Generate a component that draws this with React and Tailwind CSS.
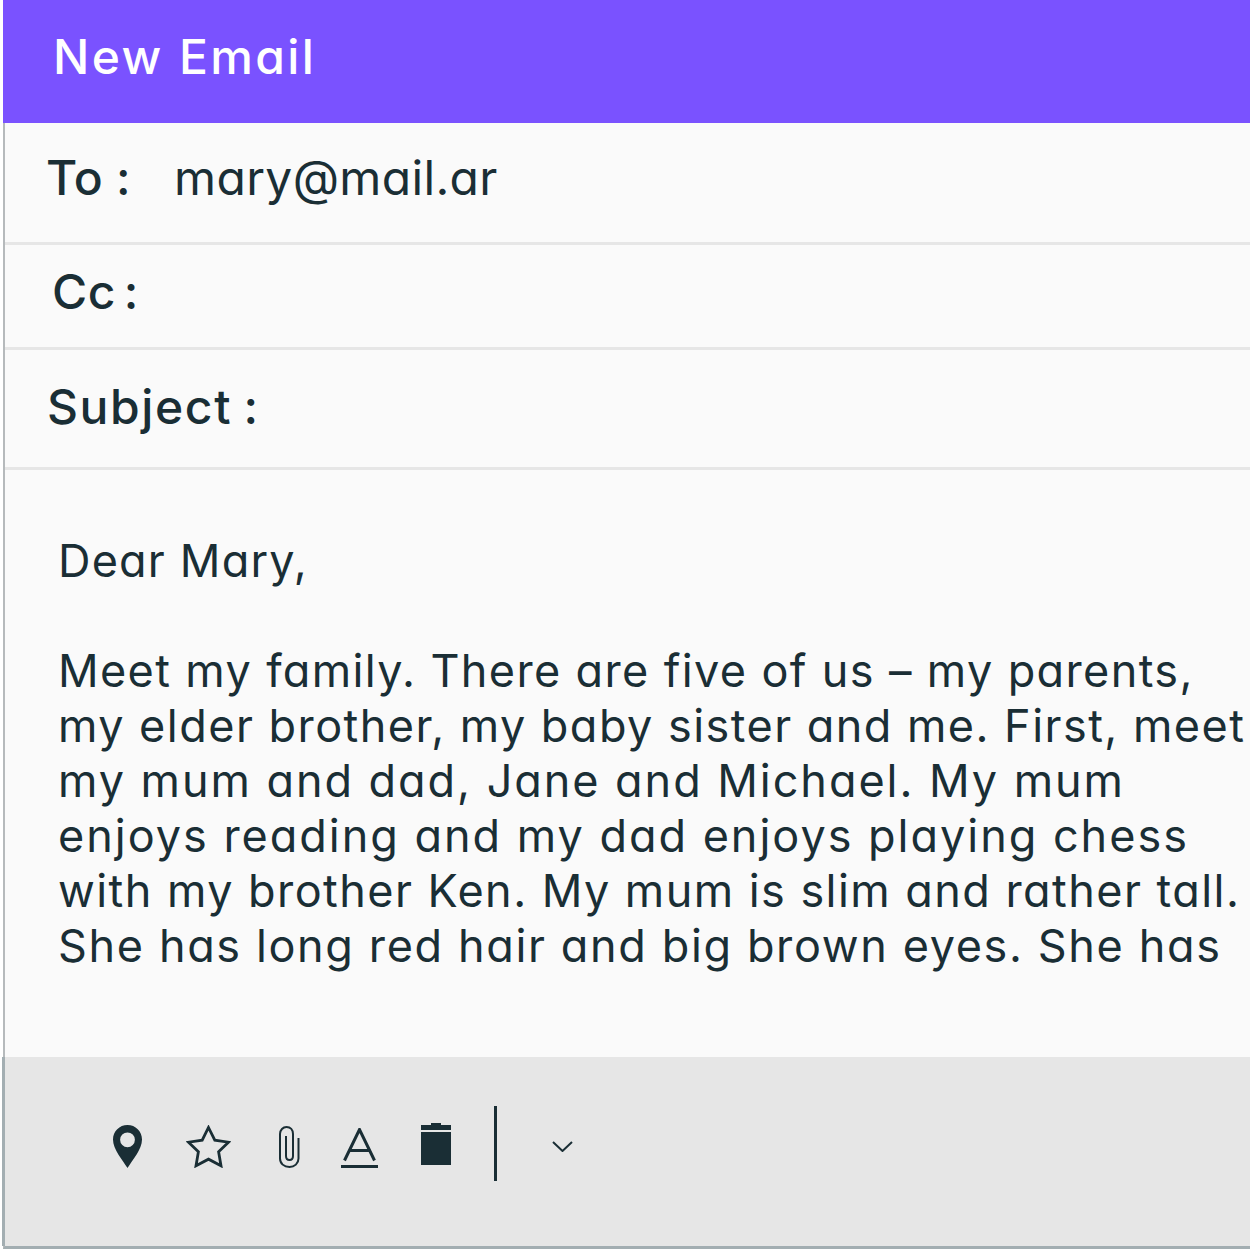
const F = "font-['Inter','Liberation_Sans',sans-serif] [font-feature-settings:'cv11']";

function Pin() {
  return (
    <svg className="mt-[68px] shrink-0" width="29" height="43" viewBox="0 0 29 43">
      <path fillRule="evenodd" fill="#1a2e35" d="M14.5 0C6.5 0 0 6.4 0 14.4 0 24 9.5 35 14.5 43 19.5 35 29 24 29 14.4 29 6.4 22.5 0 14.5 0ZM14.5 7.4a7.4 7.4 0 1 1 0 14.8 7.4 7.4 0 0 1 0-14.8Z" />
    </svg>
  );
}
function Star() {
  return (
    <svg className="ml-[44px] mt-[68px] shrink-0" width="45" height="43" viewBox="0 0 45 43">
      <path fill="none" stroke="#1a2e35" strokeWidth="2.8" d="M22.5 2.5 28.8 15.2 42.5 17.2 32.6 26.8 35 40.8 22.5 34.2 10 40.8 12.4 26.8 2.5 17.2 16.2 15.2Z" />
    </svg>
  );
}
function Clip() {
  return (
    <svg className="ml-[48px] mt-[69px] shrink-0" width="21" height="42" viewBox="0 0 21 42">
      <path fill="none" stroke="#1a2e35" strokeWidth="2" d="M19.5 12V32.5C19.5 37.5 15.5 41 10.5 41 5 41 1 37.5 1 32.5V8C1 4 4 1 7.5 1 11.5 1 14 4 14 8V30C14 32.5 12.5 34 10.5 34 8.5 34 7 32.5 7 30V10" />
    </svg>
  );
}
function LetterA() {
  return (
    <svg className="ml-[41px] mt-[71px] shrink-0" width="37" height="40" viewBox="0 0 37 40">
      <path fill="none" stroke="#1a2e35" strokeWidth="3" d="M3.5 32.5 18.5 1.5 33.5 32.5M8 22.5H29" />
      <rect x="0" y="37" width="37" height="3" fill="#1a2e35" />
    </svg>
  );
}
function Trash() {
  return (
    <svg className="ml-[43px] mt-[66px] shrink-0" width="30" height="42" viewBox="0 0 30 42">
      <path fill="#1a2e35" d="M10 0H20V2H30V7H0V2H10ZM0 9H30V42H0Z" />
    </svg>
  );
}
function Chevron() {
  return (
    <svg className="ml-[55px] mt-[84px] shrink-0" width="21" height="11" viewBox="0 0 21 11">
      <path fill="none" stroke="#1a2e35" strokeWidth="2" d="M1 1 10.5 10 20 1" />
    </svg>
  );
}

export default function App() {
  return (
    <div className={`w-[1250px] h-[1250px] bg-white overflow-hidden ${F} text-[#1a2e35]`}>
      <div className="h-[1249px] ml-[3px] border-l-2 border-b-[3px] border-l-[#b6babc] border-b-[#a3aeb2] bg-[#fafafa] flex flex-col">
        <div className="h-[123px] -ml-[2px] bg-[#7a52ff] text-white pl-[50px] pt-[27px] text-[48px] leading-[60px] font-[450] tracking-[2.4px] shrink-0">New Email</div>
        <div className="h-[122px] border-b-[3px] border-[#e6e6e6] flex shrink-0 pt-[25px] text-[48px] leading-[60px]">
          <span className="ml-[41px] w-[128px] font-[450] tracking-[0.2px]">To :</span>
          <span className="tracking-[0.35px]">mary@mail.ar</span>
        </div>
        <div className="h-[105px] border-b-[3px] border-[#e6e6e6] shrink-0 pl-[47px] pt-[17px] text-[48px] leading-[60px] font-[450] tracking-[0.5px] [word-spacing:-5.5px]">Cc :</div>
        <div className="h-[120px] border-b-[3px] border-[#e6e6e6] shrink-0 pl-[42px] pt-[27px] text-[48px] leading-[60px] font-[450] tracking-[1.6px] [word-spacing:-3px]">Subject :</div>
        <div className="flex-1 pl-[53px] pt-[63px] text-[45px] leading-[55px] whitespace-nowrap">
          <div className="tracking-[1.2px]">Dear Mary,</div>
          <div className="h-[55px]" />
          <div className="tracking-[1.37px]">Meet my family. There are five of us – my parents,</div>
          <div className="tracking-[1.47px]">my elder brother, my baby sister and me. First, meet</div>
          <div className="tracking-[1.95px]">my mum and dad, Jane and Michael. My mum</div>
          <div className="tracking-[1.98px]">enjoys reading and my dad enjoys playing chess</div>
          <div className="tracking-[1.45px]">with my brother Ken. My mum is slim and rather tall.</div>
          <div className="tracking-[1.63px]">She has long red hair and big brown eyes. She has</div>
        </div>
        <div className="h-[189px] -ml-[3px] border-l-[3px] border-l-[#a3aeb2] bg-[#e6e6e6] shrink-0 flex items-start pl-[108px]">
          <Pin />
          <Star />
          <Clip />
          <LetterA />
          <Trash />
          <div className="ml-[43px] mt-[49px] w-[3px] h-[75px] bg-[#1a2e35] shrink-0" />
          <Chevron />
        </div>
      </div>
    </div>
  );
}
